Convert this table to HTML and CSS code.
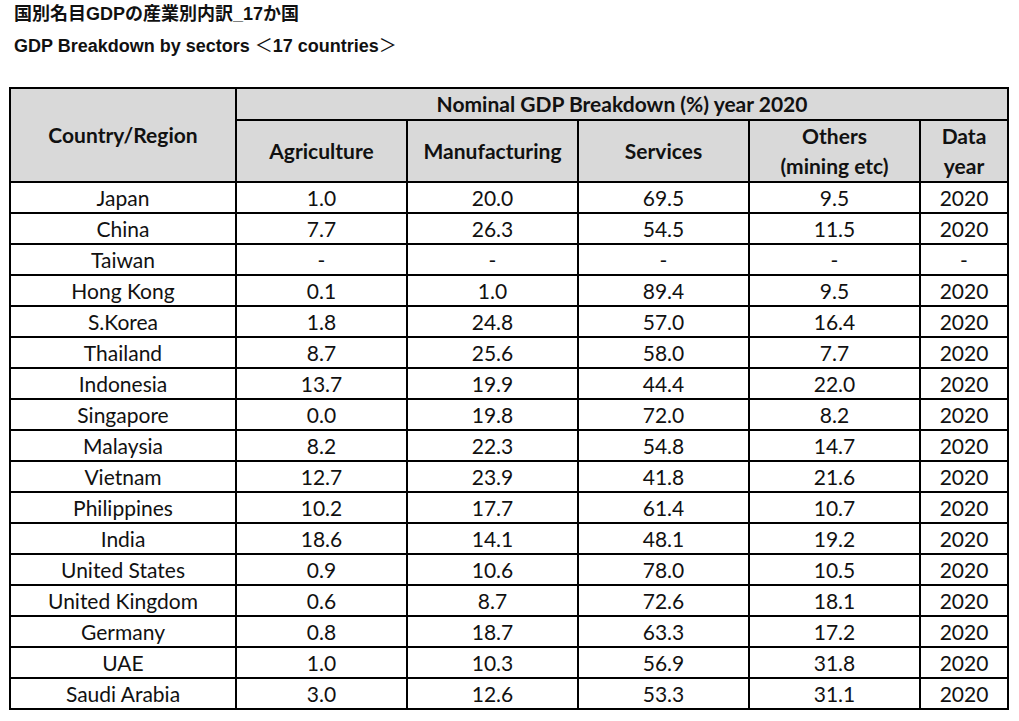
FILE: index.html
```html
<!DOCTYPE html>
<html lang="ja">
<head>
<meta charset="utf-8">
<title>GDP Breakdown by sectors</title>
<link rel="stylesheet" href="styles.css">
</head>
<body>
<div class="page">
  <div class="titles">
    <div class="title">国別名目GDPの産業別内訳_17か国</div>
    <div class="title">GDP Breakdown by sectors <span class="br">＜</span>17 countries<span class="br">＞</span></div>
  </div>
  <table class="gdp">
    <colgroup>
      <col class="c-country">
      <col class="c-val">
      <col class="c-val">
      <col class="c-val">
      <col class="c-val">
      <col class="c-year">
    </colgroup>
    <thead>
      <tr class="h1">
        <th rowspan="2">Country/Region</th>
        <th colspan="5">Nominal GDP Breakdown (%) year 2020</th>
      </tr>
      <tr class="h2">
        <th>Agriculture</th>
        <th>Manufacturing</th>
        <th>Services</th>
        <th>Others<br>(mining etc)</th>
        <th>Data<br>year</th>
      </tr>
    </thead>
    <tbody>
      <tr><td>Japan</td><td>1.0</td><td>20.0</td><td>69.5</td><td>9.5</td><td>2020</td></tr>
      <tr><td>China</td><td>7.7</td><td>26.3</td><td>54.5</td><td>11.5</td><td>2020</td></tr>
      <tr><td>Taiwan</td><td>-</td><td>-</td><td>-</td><td>-</td><td>-</td></tr>
      <tr><td>Hong Kong</td><td>0.1</td><td>1.0</td><td>89.4</td><td>9.5</td><td>2020</td></tr>
      <tr><td>S.Korea</td><td>1.8</td><td>24.8</td><td>57.0</td><td>16.4</td><td>2020</td></tr>
      <tr><td>Thailand</td><td>8.7</td><td>25.6</td><td>58.0</td><td>7.7</td><td>2020</td></tr>
      <tr><td>Indonesia</td><td>13.7</td><td>19.9</td><td>44.4</td><td>22.0</td><td>2020</td></tr>
      <tr><td>Singapore</td><td>0.0</td><td>19.8</td><td>72.0</td><td>8.2</td><td>2020</td></tr>
      <tr><td>Malaysia</td><td>8.2</td><td>22.3</td><td>54.8</td><td>14.7</td><td>2020</td></tr>
      <tr><td>Vietnam</td><td>12.7</td><td>23.9</td><td>41.8</td><td>21.6</td><td>2020</td></tr>
      <tr><td>Philippines</td><td>10.2</td><td>17.7</td><td>61.4</td><td>10.7</td><td>2020</td></tr>
      <tr><td>India</td><td>18.6</td><td>14.1</td><td>48.1</td><td>19.2</td><td>2020</td></tr>
      <tr><td>United States</td><td>0.9</td><td>10.6</td><td>78.0</td><td>10.5</td><td>2020</td></tr>
      <tr><td>United Kingdom</td><td>0.6</td><td>8.7</td><td>72.6</td><td>18.1</td><td>2020</td></tr>
      <tr><td>Germany</td><td>0.8</td><td>18.7</td><td>63.3</td><td>17.2</td><td>2020</td></tr>
      <tr><td>UAE</td><td>1.0</td><td>10.3</td><td>56.9</td><td>31.8</td><td>2020</td></tr>
      <tr><td>Saudi Arabia</td><td>3.0</td><td>12.6</td><td>53.3</td><td>31.1</td><td>2020</td></tr>
    </tbody>
  </table>
</div>
</body>
</html>
```
FILE: styles.css
```css
html, body {
  margin: 0;
  padding: 0;
  background: #ffffff;
}

.page {
  padding: 0 0 0 9px;
}

.titles {
  padding: 0 0 0 5px;
  height: 88px;
}

.title {
  font-family: "Liberation Sans", "Noto Sans CJK JP", sans-serif;
  font-weight: 700;
  font-size: 18px;
  line-height: 30px;
  color: #111111;
}

.title:first-child {
  margin-top: -1px;
}

.title .br {
  font-family: "Noto Sans CJK JP", sans-serif;
  font-weight: 400;
}

.gdp {
  border-collapse: collapse;
  table-layout: fixed;
  width: 1000px;
  font-family: "Lato", "Noto Sans", sans-serif;
  font-size: 21px;
  color: #111111;
}

.c-country { width: 226px; }
.c-val { width: 171px; }
.c-year { width: 88px; }

.gdp th,
.gdp td {
  border: 2px solid #000000;
  padding: 0;
  text-align: center;
  vertical-align: middle;
}

.gdp th {
  background: #d9d9d9;
  font-weight: 700;
  line-height: 30px;
}

.gdp .h1 th[colspan] {
  height: 30px;
}

.gdp .h2 th {
  height: 59px;
}

.gdp td {
  height: 29px;
  line-height: 29px;
  font-weight: 400;
}
```
